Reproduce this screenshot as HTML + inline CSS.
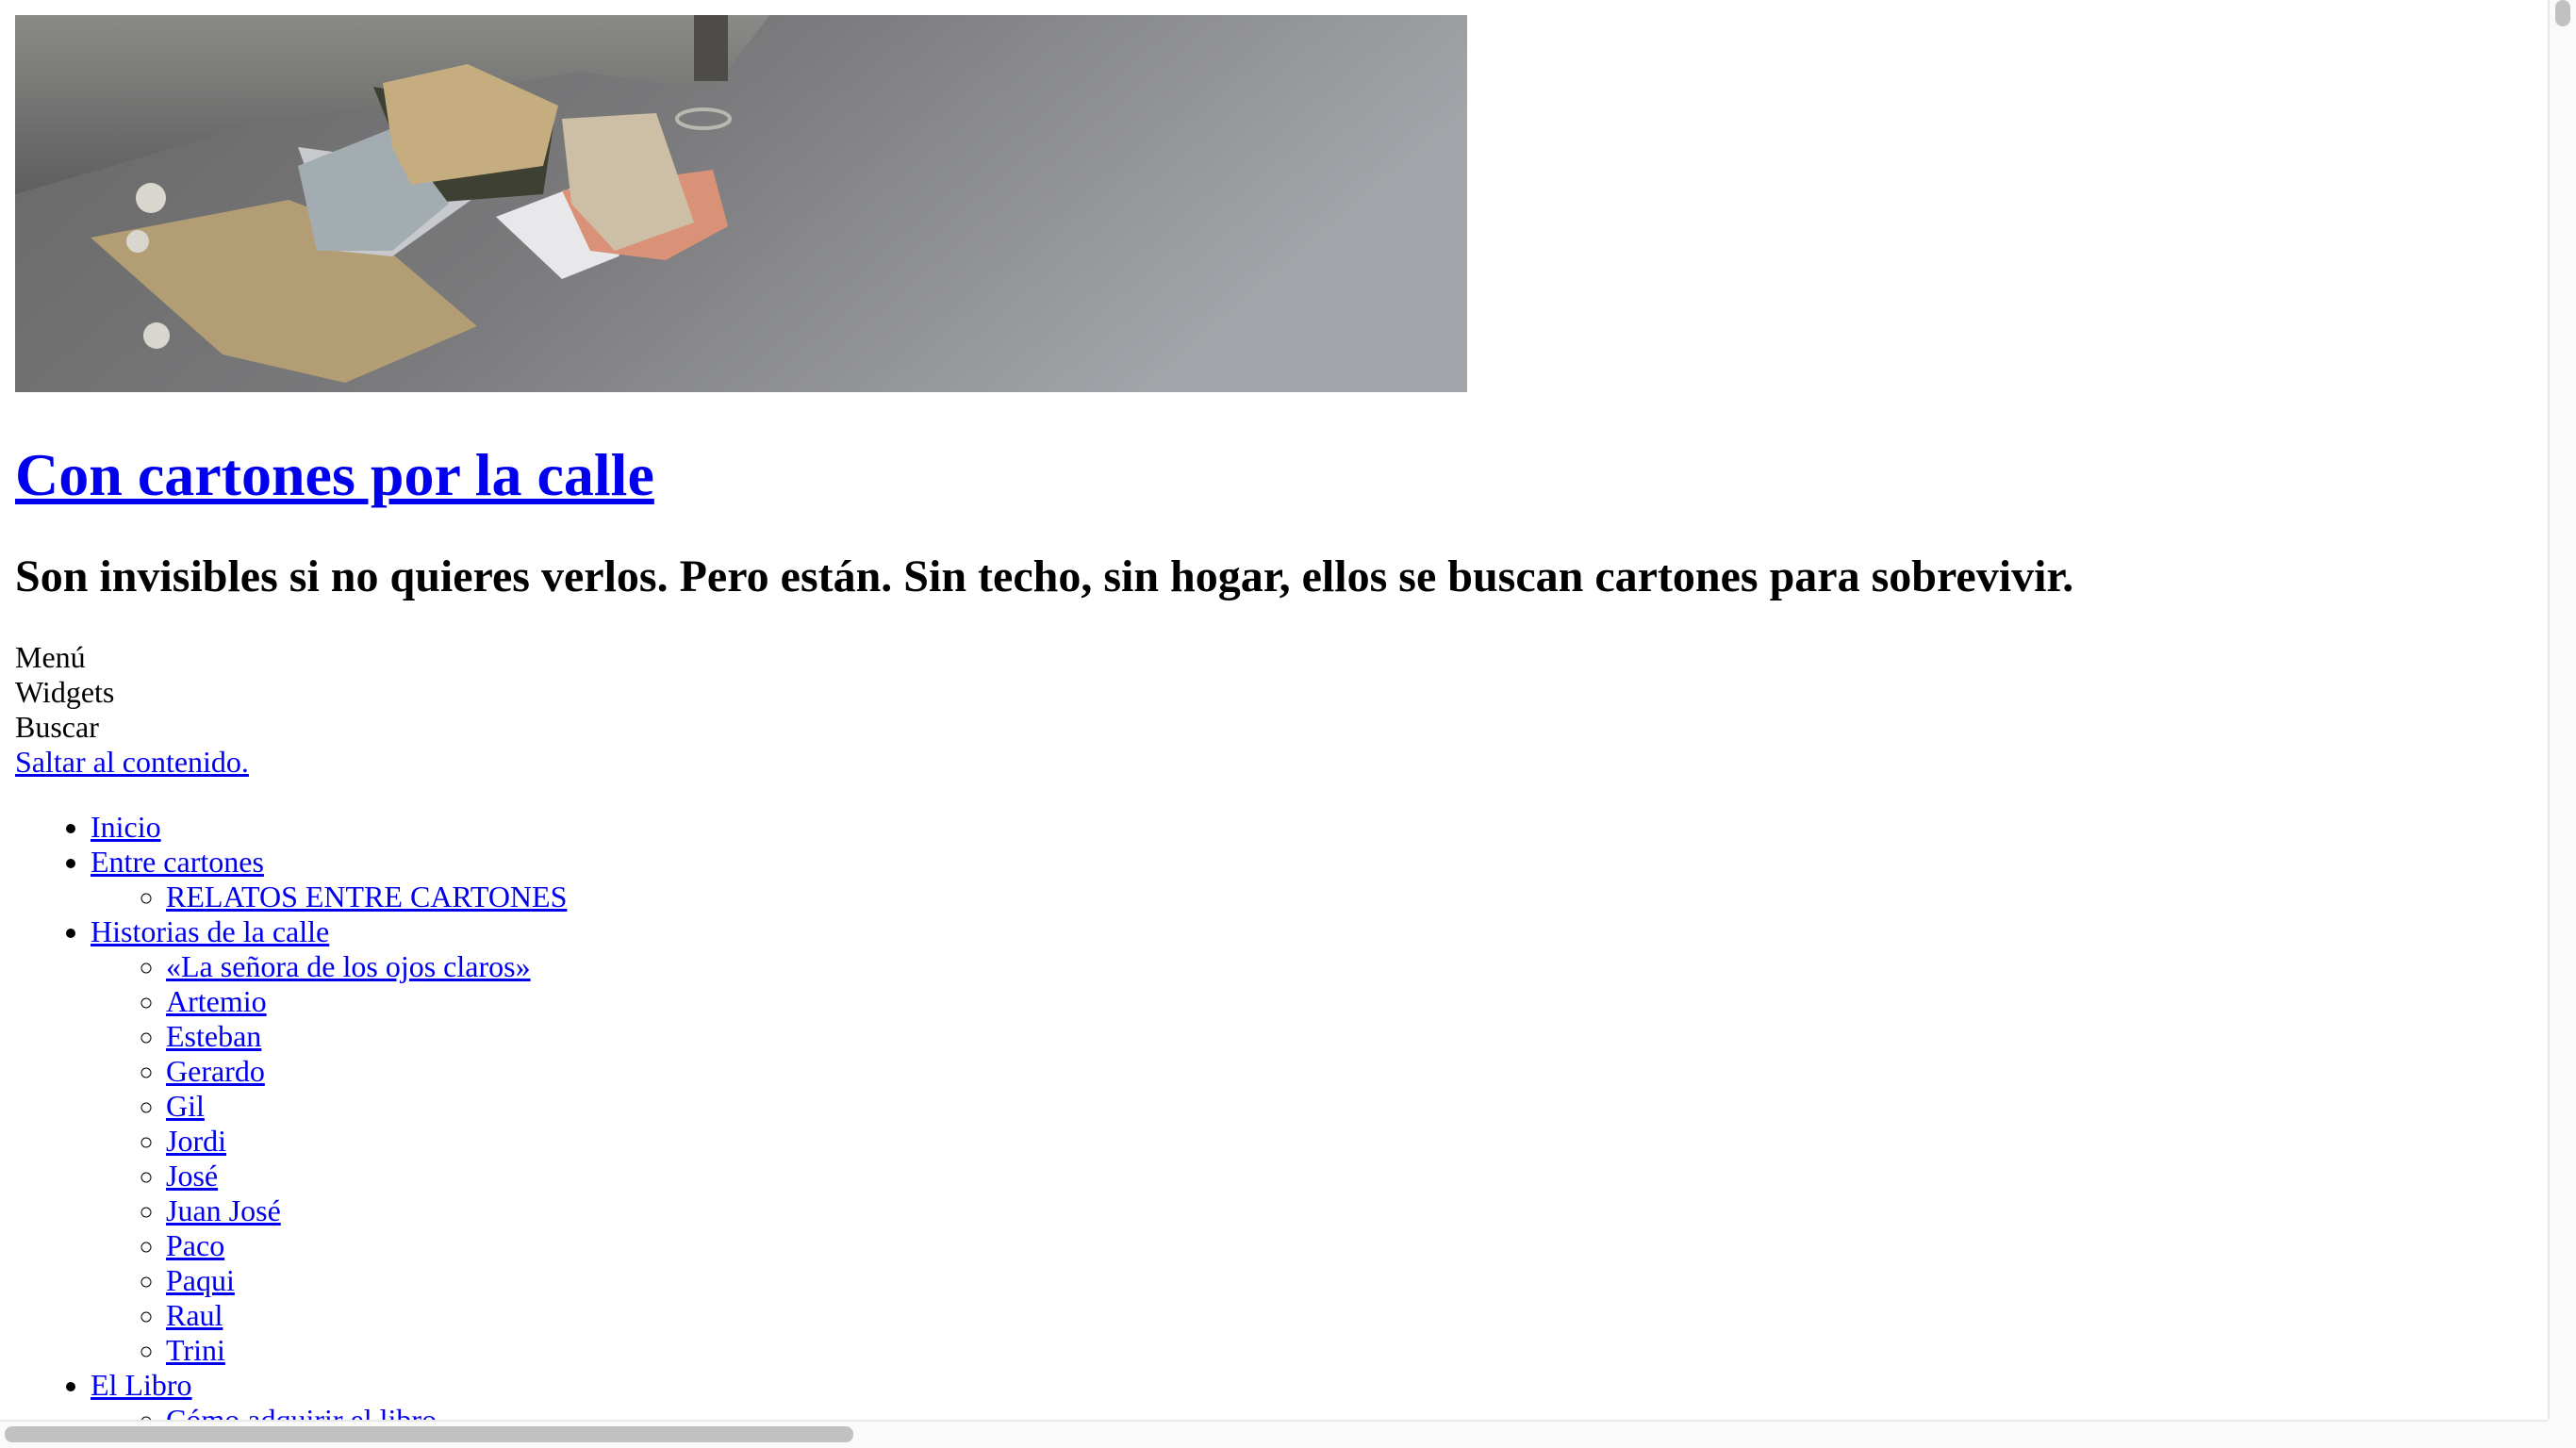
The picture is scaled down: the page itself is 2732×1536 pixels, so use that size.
<!DOCTYPE html>
<html><head><meta charset="utf-8">
<style>
html{zoom:2;overflow:hidden;width:1366px;height:768px;margin:0}
body{margin:8px;font-family:"Liberation Serif","Times New Roman",serif;font-size:16px;color:#000;background:#fff;width:1335px;height:745px;overflow:hidden}
a{color:#0000ee}
.img{display:block;width:770px;height:200px}
h1{font-size:2em;margin:25.5px 0 21.44px}
h2{font-size:1.5em;margin:.83em 0}
ul{margin:16px 0;padding-left:40px}
ul ul{margin:0;list-style:circle}
.vbar{position:fixed;left:1351px;top:0;width:15px;height:753px;background:#fafafa;border-left:1px solid #e8e8e8;box-sizing:border-box}
.vthumb{position:fixed;left:1355px;top:0;width:8px;height:14px;background:#c1c1c1;border-radius:4px}
.hbar{position:fixed;left:0;top:753px;width:1351px;height:15px;background:#fafafa;border-top:1px solid #e8e8e8;box-sizing:border-box}
.hthumb{position:fixed;left:2.5px;top:756.5px;width:450px;height:8.5px;background:#c1c1c1;border-radius:4px}
.corner{position:fixed;left:1351px;top:753px;width:15px;height:15px;background:#fafafa}
</style></head><body>
<svg class="img" viewBox="0 0 770 200" preserveAspectRatio="none">
<defs>
<linearGradient id="fl" x1="0" y1="0" x2="1" y2="0.3"><stop offset="0" stop-color="#666"/><stop offset=".5" stop-color="#7a7a7c"/><stop offset="1" stop-color="#a3a5aa"/></linearGradient>
<linearGradient id="wl" x1="0" y1="0" x2="0" y2="1"><stop offset="0" stop-color="#8a8a88"/><stop offset="1" stop-color="#5e5e5e"/></linearGradient>
</defs>
<rect width="770" height="200" fill="url(#fl)"/>
<polygon points="0,0 400,0 370,40 300,30 120,60 0,95" fill="url(#wl)"/>
<rect x="360" y="0" width="18" height="35" fill="#4e4c48"/>
<polygon points="40,118 145,98 183,112 245,165 175,195 110,180" fill="#b39d74"/>
<polygon points="150,70 260,85 200,128 170,125" fill="#c7c9cd"/>
<polygon points="255,107 315,84 335,100 320,128 290,140" fill="#e8e8ea"/>
<polygon points="290,93 370,82 378,112 345,130 305,125" fill="#d99178"/>
<polygon points="190,38 286,55 280,95 215,100" fill="#3e4034"/>
<polygon points="150,80 200,60 230,100 200,125 160,125" fill="#a3acb1"/>
<polygon points="195,36 240,26 288,48 280,80 210,90 200,70" fill="#c6ad80"/>
<polygon points="290,55 340,52 360,110 318,125 295,100" fill="#cdbfa6"/>
<circle cx="72" cy="97" r="8" fill="#d8d6cf"/><circle cx="75" cy="170" r="7" fill="#d8d6cf"/><circle cx="65" cy="120" r="6" fill="#d8d6cf"/>
<ellipse cx="365" cy="55" rx="14" ry="5" fill="none" stroke="#b8b8b0" stroke-width="2"/>
</svg>
<h1><a href="#">Con cartones por la calle</a></h1>
<h2>Son invisibles si no quieres verlos. Pero están. Sin techo, sin hogar, ellos se buscan cartones para sobrevivir.</h2>
<div>Menú</div>
<div>Widgets</div>
<div>Buscar</div>
<a href="#">Saltar al contenido.</a>
<ul>
<li><a href="#">Inicio</a></li>
<li><a href="#">Entre cartones</a><ul><li><a href="#">RELATOS ENTRE CARTONES</a></li></ul></li>
<li><a href="#">Historias de la calle</a><ul>
<li><a href="#">«La señora de los ojos claros»</a></li>
<li><a href="#">Artemio</a></li>
<li><a href="#">Esteban</a></li>
<li><a href="#">Gerardo</a></li>
<li><a href="#">Gil</a></li>
<li><a href="#">Jordi</a></li>
<li><a href="#">José</a></li>
<li><a href="#">Juan José</a></li>
<li><a href="#">Paco</a></li>
<li><a href="#">Paqui</a></li>
<li><a href="#">Raul</a></li>
<li><a href="#">Trini</a></li>
</ul></li>
<li><a href="#">El Libro</a><ul><li><a href="#">Cómo adquirir el libro</a></li></ul></li>
</ul>
<div class="vbar"></div><div class="vthumb"></div>
<div class="hbar"></div><div class="hthumb"></div><div class="corner"></div>
</body></html>
